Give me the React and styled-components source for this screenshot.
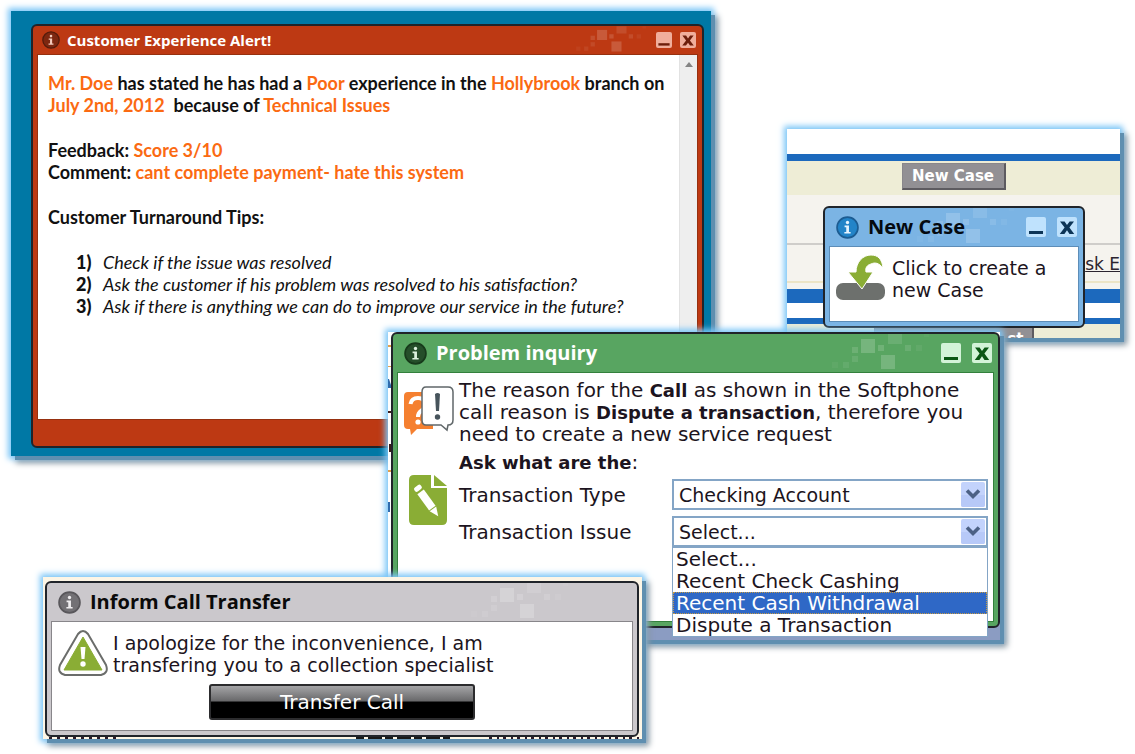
import React from 'react';
import { createGlobalStyle, styled } from 'styled-components';

const GlobalStyle = createGlobalStyle`
  body {
    margin: 0;
    background: #fff;
  }
  * {
    box-sizing: border-box;
  }
`;

const Desktop = styled.main`
  position: relative;
  min-height: 100vh;
  overflow: hidden;
  font-family: 'DejaVu Sans', sans-serif;
  font-size: 20px;
  line-height: 22px;
  color: #1c1420;
`;

const Shot = styled.section`
  position: absolute;
  left: ${(p) => p.$left}px;
  top: ${(p) => p.$top}px;
  width: ${(p) => p.$width}px;
  padding: ${(p) => p.$pad || '0'};
  background: ${(p) => p.$bg || '#fff'};
  box-shadow:
    4px 4px 0 #5f8fb0,
    0 0 6px 3px #7cc6f7,
    6px 6px 6px 1px #8a949c;
`;

const Panel = styled.article`
  position: relative;
  display: flex;
  flex-direction: column;
  padding: 0 4px ${(p) => p.$bottom || 4}px;
  background: ${(p) => p.$color};
  border: 2px solid #20242a;
  border-radius: 6px;
`;

const TitleBar = styled.header`
  position: relative;
  display: flex;
  align-items: center;
  gap: ${(p) => (p.$small ? 7 : 9)}px;
  height: ${(p) => (p.$small ? 28 : 38)}px;
  padding: 0 2px 0 ${(p) => (p.$small ? 5 : 7)}px;
  color: ${(p) => p.$ink};
`;

const Title = styled.h2`
  position: relative;
  flex: 1;
  margin: 0;
  font-family: 'Open Sans', sans-serif;
  font-size: ${(p) => (p.$small ? 15 : 20)}px;
  line-height: 24px;
  font-weight: 700;
  white-space: nowrap;
`;

const Pixels = styled.svg`
  position: absolute;
  top: 0;
  right: ${(p) => (p.$small ? 52 : 65)}px;
  width: ${(p) => (p.$small ? 72 : 100)}px;
  height: ${(p) => (p.$small ? 28 : 38)}px;
`;

const Controls = styled.div`
  position: relative;
  display: flex;
  gap: ${(p) => (p.$small ? 8 : 11)}px;
`;

const TitleButton = styled.button`
  display: block;
  width: ${(p) => (p.$small ? 16 : 20)}px;
  height: ${(p) => (p.$small ? 16 : 20)}px;
  padding: 0;
  border: 0;
  border-radius: 2px;
  background: ${(p) => p.$face};
  color: ${(p) => p.$ink};
  svg {
    display: block;
    width: 100%;
    height: 100%;
  }
`;

const Body = styled.div`
  min-height: ${(p) => p.$min || 0}px;
  padding: ${(p) => p.$pad || '0'};
  background: #fff;
  border: 1px solid ${(p) => p.$edge};
`;

const SQUARES = [
  [3, 28, 6, 6, 0.25],
  [14, 28, 6, 6, 0.4],
  [23, 13, 6, 6, 0.7],
  [23, 22, 6, 6, 0.5],
  [32, 5, 14, 14, 1],
  [49, 11, 6, 6, 0.8],
  [59, 0, 14, 10, 0.6],
  [52, 21, 14, 14, 1],
  [76, 11, 6, 6, 0.6],
  [87, 11, 6, 6, 0.3],
  [95, 0, 6, 3, 0.2],
];

const PixelArt = ({ small, strength }) => (
  <Pixels $small={small} viewBox="0 0 100 38" aria-hidden="true">
    {SQUARES.map(([x, y, w, h, o]) => (
      <rect key={`${x}-${y}`} x={x} y={y} width={w} height={h} fill="#fff" opacity={o * strength} />
    ))}
  </Pixels>
);

const InfoIcon = ({ size, fill, ring, ink }) => (
  <svg width={size} height={size} viewBox="0 0 22 22" aria-hidden="true">
    <circle cx="11" cy="11" r="10" fill={fill} stroke={ring} strokeWidth="1.6" />
    <circle cx="11" cy="6.2" r="1.6" fill={ink} />
    <path d="M8.2 9.2h4.2v6h1.6v1.6H8v-1.6h1.8v-4.4H8.2z" fill={ink} />
  </svg>
);

const PanelTitle = ({ title, theme, small, controls = true }) => (
  <TitleBar $small={small} $ink={theme.text}>
    <PixelArt small={small} strength={theme.pixels} />
    <InfoIcon size={small ? 18 : 23} fill={theme.info} ring={theme.ring} ink={theme.infoInk} />
    <Title $small={small}>{title}</Title>
    {controls && (
      <Controls $small={small}>
        <TitleButton type="button" aria-label="Minimize" $small={small} $face={theme.face} $ink={theme.ink}>
          <svg viewBox="0 0 20 20">
            <path d="M3 14h14v3H3z" fill="currentColor" />
          </svg>
        </TitleButton>
        <TitleButton type="button" aria-label="Close" $small={small} $face={theme.face} $ink={theme.ink}>
          <svg viewBox="0 0 20 20">
            <path
              d="M3 4.5h4.6L10 8l2.6-3.5H17l-4.6 6L17.2 17h-4.7L10 13.3 7.4 17H2.8l4.8-6.5z"
              fill="currentColor"
            />
          </svg>
        </TitleButton>
      </Controls>
    )}
  </TitleBar>
);

const red = {
  color: '#bd3913',
  edge: '#96300f',
  text: '#fff',
  info: '#7d2710',
  ring: '#551c0c',
  infoInk: '#f3cabb',
  face: '#f0ae9c',
  ink: '#6c1d0b',
  pixels: 0.17,
};
const blue = {
  color: '#7bb4e4',
  edge: '#5d8db8',
  text: '#050a10',
  info: '#2384c8',
  ring: '#1c5c92',
  infoInk: '#e6f4ff',
  face: '#bfe2fd',
  ink: '#0d3557',
  pixels: 0.18,
};
const green = {
  color: '#58a561',
  edge: '#33803c',
  text: '#fff',
  info: '#254e2a',
  ring: '#173a1b',
  infoInk: '#dcf2de',
  face: '#d3f3d8',
  ink: '#0b5714',
  pixels: 0.18,
};
const grey = {
  color: '#cbc8cc',
  edge: '#88868a',
  text: '#0a0a0a',
  info: '#737175',
  ring: '#59575b',
  infoInk: '#efedef',
  pixels: 0.2,
};

// bits of the page behind that show past a panel's edge
const Scraps = styled.svg`
  position: absolute;
  left: 0;
  bottom: 0;
  width: ${(p) => p.$w};
  height: ${(p) => p.$h};
`;

/* customer alert */

const AlertBody = styled(Body)`
  display: flex;
  font-family: Lato, sans-serif;
  font-size: 18px;
  color: #111;
`;

const AlertText = styled.div`
  flex: 1;
  padding: 17px 8px 0 10px;
  font-weight: 700;
  p {
    margin: 0 0 23px;
  }
`;

const Mark = styled.span`
  color: #fb6a12;
`;

const Tips = styled.ol`
  margin: 0;
  padding: 0 0 0 28px;
  list-style: none;
  li {
    display: flex;
  }
  b {
    width: 27px;
  }
  i {
    font-weight: 400;
  }
`;

const ScrollTrack = styled.div`
  width: 18px;
  padding: 7px 5px;
  background: #eeeeee;
  border-left: 1px solid #e2e2e2;
  svg {
    display: block;
  }
`;

const CustomerAlert = () => (
  <Shot $left={11} $top={11} $width={700} $bg="#0078a5" $pad="13px 7px 8px 20px">
    <Panel $color={red.color} $bottom={26}>
      <PanelTitle title="Customer Experience Alert!" theme={red} small />
      <AlertBody $min={366} $edge={red.edge}>
        <AlertText>
          <p>
            <Mark>Mr. Doe</Mark> has stated he has had a <Mark>Poor</Mark> experience in the <Mark>Hollybrook</Mark>{' '}
            branch on
            <br />
            <Mark>July 2nd, 2012</Mark>&nbsp; because of <Mark>Technical Issues</Mark>
          </p>
          <p>
            Feedback: <Mark>Score 3/10</Mark>
            <br />
            Comment: <Mark>cant complete payment- hate this system</Mark>
          </p>
          <p>Customer Turnaround Tips:</p>
          <Tips>
            <li>
              <b>1)</b>
              <i>Check if the issue was resolved</i>
            </li>
            <li>
              <b>2)</b>
              <i>Ask the customer if his problem was resolved to his satisfaction?</i>
            </li>
            <li>
              <b>3)</b>
              <i>Ask if there is anything we can do to improve our service in the future?</i>
            </li>
          </Tips>
        </AlertText>
        <ScrollTrack>
          <svg width="8" height="5" viewBox="0 0 8 5" aria-hidden="true">
            <path d="M0 5 4 0l4 5z" fill="#858585" />
          </svg>
        </ScrollTrack>
      </AlertBody>
    </Panel>
  </Shot>
);

/* new case */

const Band = styled.div`
  display: flex;
  justify-content: center;
  height: ${(p) => p.$h}px;
  padding-top: ${(p) => p.$top || 0}px;
  background: ${(p) => p.$bg};
  border-bottom: ${(p) => (p.$line ? `2px solid ${p.$line}` : '0')};
  overflow: hidden;
`;

const GreyButton = styled.button`
  width: ${(p) => p.$w}px;
  height: 27px;
  padding: 0 8px;
  border: 1px solid #89878b;
  border-right: 2px solid #5d5b60;
  border-bottom: 2px solid #5d5b60;
  background: #929094;
  color: #fff;
  font: 700 15px/20px 'DejaVu Sans', sans-serif;
  text-align: ${(p) => p.$align || 'center'};
`;

const PageLink = styled.a`
  flex: 1;
  text-align: right;
  white-space: nowrap;
  color: #2c2430;
  font-size: 17px;
  text-decoration: underline;
`;

const CasePopup = styled.div`
  position: absolute;
  left: 36px;
  top: 77px;
  width: 262px;
`;

const IconRow = styled.div`
  display: flex;
  align-items: flex-start;
  gap: ${(p) => p.$gap}px;
  font-size: 19px;
  p {
    margin: 2px 0 0;
  }
`;

const NewCase = () => (
  <Shot $left={787} $top={129} $width={333}>
    <Band $h={25} $bg="#fff" />
    <Band $h={7} $bg="#1c69bd" />
    <Band $h={34} $bg="#eeedd6" $top={2}>
      <GreyButton type="button" $w={104}>
        New Case
      </GreyButton>
    </Band>
    <Band $h={50} $bg="#f5f3ee" $line="#cfcdca" />
    <Band $h={38} $bg="#f5f3ee" $line="#ece4c6" $top={8}>
      <PageLink href="#task">sk E</PageLink>
    </Band>
    <Band $h={6} $bg="#f5f3ee" />
    <Band $h={14} $bg="#1c69bd" />
    <Band $h={15} $bg="#fff" />
    <Band $h={6} $bg="#1c69bd" />
    <Band $h={14} $bg="#eeedd6" $top={2}>
      <GreyButton type="button" $w={160} $align="right">
        st
      </GreyButton>
    </Band>
    <CasePopup>
      <Panel $color={blue.color}>
        <PanelTitle title="New Case" theme={blue} />
        <Body $edge={blue.edge} $min={76} $pad="8px 5px 16px">
          <IconRow $gap={6}>
            <svg width="51" height="46" viewBox="0 0 51 46" aria-hidden="true">
              <rect x="1" y="28" width="49" height="17" rx="7" fill="#6d706d" />
              <path
                d="M13 17h8C21 7 28 0 36 0c7 0 11 4 12 13-4-5-8-6-12-4-4 1-6 4-5 8h7L27 34z"
                fill="#8aad35"
                stroke="#fff"
                strokeWidth="1"
              />
            </svg>
            <p>
              Click to create a<br />
              new Case
            </p>
          </IconRow>
        </Body>
      </Panel>
    </CasePopup>
  </Shot>
);

/* problem inquiry */

const InquiryGrid = styled.form`
  display: grid;
  grid-template-columns: 51px 1fr;
  column-gap: 5px;
  row-gap: 6px;
  p {
    margin: 0;
    white-space: nowrap;
  }
  b {
    font-size: 18px;
    line-height: 18px;
  }
`;

const IconCell = styled.div`
  grid-row: ${(p) => p.$rows};
  padding: ${(p) => p.$pad};
  svg {
    display: block;
  }
`;

const Fields = styled.div`
  grid-column: 2;
  display: grid;
  grid-template-columns: 208px 1fr;
  gap: 6px 5px;
  align-items: center;
`;

const SelectBox = styled.div`
  position: relative;
`;

const Select = styled.select`
  display: block;
  width: 100%;
  height: 31px;
  padding: 0 30px 0 5px;
  appearance: none;
  background: #fff;
  border: 2px solid #84a5c6;
  border-radius: 0;
  color: inherit;
  font: 19px/22px 'DejaVu Sans', sans-serif;
`;

const Arrow = styled.svg`
  position: absolute;
  top: 3px;
  right: 3px;
  width: 24px;
  height: 25px;
  pointer-events: none;
`;

const Options = styled.ul`
  position: absolute;
  z-index: 1;
  top: 31px;
  left: 0;
  right: 0;
  margin: 0;
  padding: 0;
  background: #fff;
  border: 1px solid #84a5c6;
  list-style: none;
`;

const Option = styled.li`
  padding-left: 3px;
  background: ${(p) => (p.$active ? '#2f68c6' : 'transparent')};
  color: ${(p) => (p.$active ? '#fff' : 'inherit')};
  outline: ${(p) => (p.$active ? '1px dotted #c69a45' : 'none')};
  outline-offset: -1px;
`;

const DropArrow = () => (
  <Arrow viewBox="0 0 24 25" aria-hidden="true">
    <rect x="0" y="0" width="24" height="25" rx="2" fill="#c3d3fc" />
    <path d="M0 13h24v10a2 2 0 0 1-2 2H2a2 2 0 0 1-2-2z" fill="#b7c9f8" />
    <path d="m6 8.5 6 6 6-6" fill="none" stroke="#4c6185" strokeWidth="3.6" />
  </Arrow>
);

const OPTIONS = ['Select...', 'Recent Check Cashing', 'Recent Cash Withdrawal', 'Dispute a Transaction'];

const ProblemInquiry = () => (
  <Shot $left={388} $top={332} $width={612} $bg="linear-gradient(#fff 290px, #8b9cc2 290px)" $pad="0 0 12px 3px">
    <Scraps $w="3px" $h="100%" viewBox="0 0 3 308" preserveAspectRatio="none" aria-hidden="true">
      <path d="M0 13h3v2H0zM0 138h3v2H0zM0 34h3v1H0z" fill="#e3a04c" />
      <path d="M0 47h1l2 6v3H0zM0 170h2v10H0z" fill="#2f6cae" />
      <path d="M0 79h3v2H0zM1 112h2v8H1z" fill="#3a1c1a" />
    </Scraps>
    <Panel $color={green.color}>
      <PanelTitle title="Problem inquiry" theme={green} />
      <Body $edge={green.edge} $min={250} $pad="6px 5px 0">
        <InquiryGrid>
          <IconCell $rows="1" $pad="7px 0 0">
            <svg width="51" height="50" viewBox="0 0 51 50" aria-hidden="true">
              <path d="M5 6h25v37H14l-6 6-1-6H5q-4 0-4-4V10q0-4 4-4z" fill="#f58030" />
              <path
                d="M7.5 18q1-6 7.5-6t7 6.5q0 4-4 6.5-3 2-3 6"
                fill="none"
                stroke="#fff"
                strokeWidth="4"
              />
              <circle cx="15" cy="36" r="2.6" fill="#fff" />
              <path
                d="M23 1h22q5 0 5 5v28q0 5-5 5l-1 5-6-5H23q-4 0-4-5V6q0-5 4-5z"
                fill="#fff"
                stroke="#606769"
                strokeWidth="1.5"
              />
              <path d="M32 8q2.5-2 5 0l-1 17h-3z" fill="#47545c" />
              <circle cx="34.5" cy="31" r="2.7" fill="#47545c" />
            </svg>
          </IconCell>
          <p>
            The reason for the <b>Call</b> as shown in the Softphone
            <br />
            call reason is <b>Dispute a transaction</b>, therefore you
            <br />
            need to create a new service request
          </p>
          <IconCell $rows="2 / 4" $pad="24px 0 0 6px">
            <svg width="39" height="50" viewBox="0 0 39 50" aria-hidden="true">
              <path d="M5 0h17v13h16v32q0 5-5 5H5q-5 0-5-5V5q0-5 5-5z" fill="#8aad35" />
              <path d="M25 0l13 11H25z" fill="#8aad35" />
              <g transform="translate(6 16) rotate(-36)" fill="#fff">
                <rect x="0" y="-3" width="8" height="5" rx="2" />
                <rect x="0" y="4" width="8" height="20" />
                <path d="M0 25h8l-4 9z" />
              </g>
            </svg>
          </IconCell>
          <p>
            <b>Ask what are the</b>:
          </p>
          <Fields>
            <label htmlFor="type">Transaction Type</label>
            <SelectBox>
              <Select id="type" defaultValue="Checking Account">
                <option>Checking Account</option>
              </Select>
              <DropArrow />
            </SelectBox>
            <label htmlFor="issue">Transaction Issue</label>
            <SelectBox>
              <Select id="issue" defaultValue="Select...">
                {OPTIONS.map((o) => (
                  <option key={o}>{o}</option>
                ))}
              </Select>
              <DropArrow />
              <Options role="listbox" aria-label="Transaction Issue">
                {OPTIONS.map((o) => {
                  const active = o === 'Recent Cash Withdrawal';
                  return (
                    <Option key={o} role="option" aria-selected={active} $active={active}>
                      {o}
                    </Option>
                  );
                })}
              </Options>
            </SelectBox>
          </Fields>
        </InquiryGrid>
      </Body>
    </Panel>
  </Shot>
);

/* call transfer */

const TransferButton = styled.button`
  display: block;
  width: 266px;
  height: 36px;
  margin: 8px auto 0;
  padding: 0;
  border: 2px solid #2c2c2e;
  border-radius: 3px;
  background: linear-gradient(#a5a5a7, #68686a 47%, #000 50%, #000);
  color: #fff;
  font: 20px/24px 'DejaVu Sans', sans-serif;
`;

const CallTransfer = () => (
  <Shot $left={43} $top={577} $width={599} $bg="#fdf6e6" $pad="4px 3px 2px 2px">
    <Scraps $w="100%" $h="2px" viewBox="0 0 599 2" preserveAspectRatio="none" aria-hidden="true">
      <path d="M6 1h70" stroke="#2a1a2a" strokeWidth="2" strokeDasharray="3 5" />
      <path d="M313 1h94" stroke="#181818" strokeWidth="2" strokeDasharray="8 4 14 3" />
      <path d="M446 1h150" stroke="#2a1a2a" strokeWidth="2" strokeDasharray="3 5 2 4" />
    </Scraps>
    <Panel $color={grey.color}>
      <PanelTitle title="Inform Call Transfer" theme={grey} controls={false} />
      <Body $edge={grey.edge} $min={110} $pad="8px 6px 10px">
        <IconRow $gap={5}>
          <svg width="50" height="46" viewBox="0 0 50 46" aria-hidden="true">
            <path
              d="M20 4q5-6 10 0l18 31q3 8-5 10H7q-8-2-5-10z"
              fill="#fff"
              stroke="#6b6d6b"
              strokeWidth="2"
            />
            <path d="M25 7 44 40H6z" fill="#8aad35" stroke="#8aad35" strokeWidth="1" strokeLinejoin="round" />
            <path d="M22.5 17h5l-1 12h-3z" fill="#fff" />
            <circle cx="25" cy="34" r="2.7" fill="#fff" />
          </svg>
          <p>
            I apologize for the inconvenience, I am
            <br />
            transfering you to a collection specialist
          </p>
        </IconRow>
        <TransferButton type="button">Transfer Call</TransferButton>
      </Body>
    </Panel>
  </Shot>
);

const App = () => {
  return (
    <>
      <GlobalStyle />
      <Desktop>
        <CustomerAlert />
        <NewCase />
        <ProblemInquiry />
        <CallTransfer />
      </Desktop>
    </>
  );
};

export default App;
